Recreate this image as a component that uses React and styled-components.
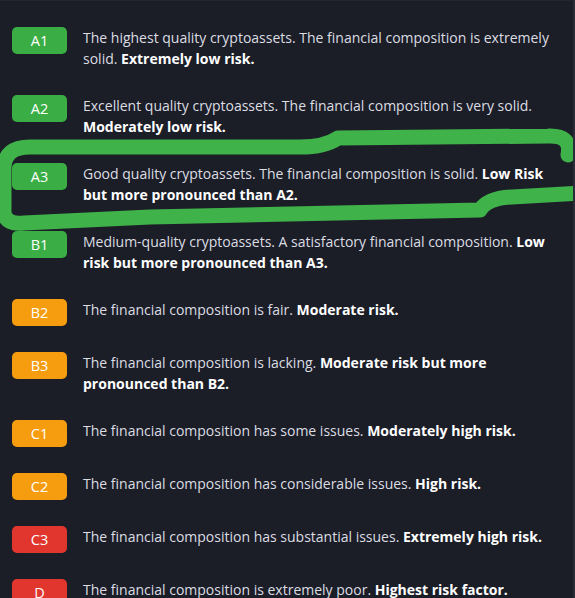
import React from "react";
import styled, { createGlobalStyle } from "styled-components";

const GlobalStyle = createGlobalStyle`
  html, body { margin: 0; padding: 0; background: #1b1d27; }
  body { font-family: "Open Sans", "Noto Sans", sans-serif; -webkit-font-smoothing: antialiased; }
`;

const Page = styled.div`
  position: relative;
  box-sizing: border-box;
  width: 575px;
  height: 598px;
  overflow: hidden;
  padding: 26px 0 0 12px;
  display: flex;
  flex-direction: column;
  gap: 26px;
  background: #1b1d27;
  border-top: 1px solid #232532;
  border-right: 2px solid #2a2c37;
`;

const Row = styled.div`
  display: flex;
  align-items: flex-start;
  gap: 16px;
`;

const tones = {
  green: "#3aad45",
  orange: "#f59c0f",
  red: "#e0362e",
};

const Badge = styled.div`
  flex: 0 0 55px;
  height: 27px;
  border-radius: 5px;
  background: ${(p) => tones[p.$tone]};
  color: #fff;
  display: flex;
  align-items: center;
  justify-content: center;
  font-size: 14.5px;
  font-weight: 500;
`;

const Desc = styled.p`
  margin: 0;
  font-size: 14px;
  line-height: 21px;
  color: #dcdde3;
  white-space: nowrap;

  b {
    font-weight: 700;
    color: #ffffff;
  }
`;

const Scribble = styled.svg`
  position: absolute;
  left: 0;
  top: 0;
  width: 575px;
  height: 598px;
  pointer-events: none;
`;

const items = [
  {
    code: "A1",
    tone: "green",
    lines: [
      <>The highest quality cryptoassets. The financial composition is extremely</>,
      <>solid. <b>Extremely low risk.</b></>,
    ],
  },
  {
    code: "A2",
    tone: "green",
    lines: [
      <>Excellent quality cryptoassets. The financial composition is very solid.</>,
      <><b>Moderately low risk.</b></>,
    ],
  },
  {
    code: "A3",
    tone: "green",
    lines: [
      <>Good quality cryptoassets. The financial composition is solid. <b>Low Risk</b></>,
      <><b>but more pronounced than A2.</b></>,
    ],
  },
  {
    code: "B1",
    tone: "green",
    lines: [
      <>Medium-quality cryptoassets. A satisfactory financial composition. <b>Low</b></>,
      <><b>risk but more pronounced than A3.</b></>,
    ],
  },
  {
    code: "B2",
    tone: "orange",
    lines: [<>The financial composition is fair. <b>Moderate risk.</b></>],
  },
  {
    code: "B3",
    tone: "orange",
    lines: [
      <>The financial composition is lacking. <b>Moderate risk but more</b></>,
      <><b>pronounced than B2.</b></>,
    ],
  },
  {
    code: "C1",
    tone: "orange",
    lines: [<>The financial composition has some issues. <b>Moderately high risk.</b></>],
  },
  {
    code: "C2",
    tone: "orange",
    lines: [<>The financial composition has considerable issues. <b>High risk.</b></>],
  },
  {
    code: "C3",
    tone: "red",
    lines: [<>The financial composition has substantial issues. <b>Extremely high risk.</b></>],
  },
  {
    code: "D",
    tone: "red",
    lines: [<>The financial composition is extremely poor. <b>Highest risk factor.</b></>],
  },
];

export default function App() {
  return (
    <>
      <GlobalStyle />
      <Page>
        {items.map((it) => (
          <Row key={it.code}>
            <Badge $tone={it.tone}>{it.code}</Badge>
            <Desc>
              {it.lines.map((l, i) => (
                <React.Fragment key={i}>
                  {i > 0 && <br />}
                  {l}
                </React.Fragment>
              ))}
            </Desc>
          </Row>
        ))}
        <Scribble viewBox="0 0 575 598">
          <path
            d="M 568 154 Q 572 134 548 135 L 338 137 Q 325 146 300 146 L 30 146 Q 4 146 4 168 L 4 212 Q 6 224 24 222 L 150 216 L 480 209 Q 488 197 512 196 L 580 192"
            fill="none"
            stroke="#3fb24a"
            strokeWidth="15"
            strokeLinecap="round"
            strokeLinejoin="round"
          />
        </Scribble>
      </Page>
    </>
  );
}
